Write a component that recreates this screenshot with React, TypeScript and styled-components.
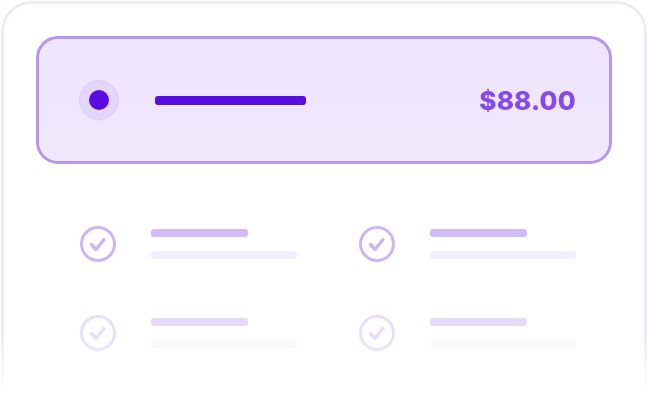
import styled, { createGlobalStyle } from "styled-components";

const GlobalStyle = createGlobalStyle`
  html, body {
    margin: 0;
    padding: 0;
    background: #ffffff;
    font-family: Inter, "Liberation Sans", sans-serif;
  }
`;

const Frame = styled.div`
  box-sizing: border-box;
  margin: 1px 1px 0 1px;
  height: 430px;
  border: 3px solid #efe9fe;
  border-radius: 30px;
  padding: 32px 32px 0 32px;
  background: #ffffff;
  -webkit-mask-image: linear-gradient(to bottom, #000 78%, transparent 92%);
  mask-image: linear-gradient(to bottom, #000 78%, transparent 92%);
`;

const PlanCard = styled.div`
  box-sizing: border-box;
  height: 128px;
  display: flex;
  align-items: center;
  padding: 0 33px 0 40px;
  border: 3px solid #b995f2;
  border-radius: 22px;
  background: linear-gradient(to bottom, #efe5fd, #f0e8fd);
`;

const Radio = styled.div`
  box-sizing: border-box;
  width: 40px;
  height: 40px;
  border-radius: 50%;
  background: #e3d6fa;
  border: 1px solid #dccdf8;
  display: flex;
  align-items: center;
  justify-content: center;
  flex-shrink: 0;
`;

const RadioDot = styled.div`
  width: 20px;
  height: 20px;
  border-radius: 50%;
  background: #5a0ce0;
`;

const TitleBar = styled.div`
  width: 151px;
  height: 9px;
  border-radius: 3px;
  background: #5a0de0;
  margin-left: 36px;
`;

const Price = styled.div`
  margin-left: auto;
  font-size: 26px;
  font-weight: 800;
  color: #8549ec;
  letter-spacing: 0.2px;
`;

const Features = styled.div`
  display: grid;
  grid-template-columns: 279px 1fr;
  row-gap: 53px;
  margin-top: 62px;
  padding-left: 44px;
`;

const Feature = styled.div`
  display: flex;
  align-items: center;
  gap: 35px;
`;

const Lines = styled.div`
  display: flex;
  flex-direction: column;
  gap: 14px;
`;

const Line = styled.div<{ $w: number; $c: string }>`
  width: ${(p) => p.$w}px;
  height: 8px;
  border-radius: 3px;
  background: ${(p) => p.$c};
`;

const tones = [
  { icon: "#cdb6f5", head: "#d0bbf6", sub: "#f4effe" },
  { icon: "#e9ddfb", head: "#e6dafb", sub: "#f9f6ff" },
];

const CheckIcon = ({ color }: { color: string }) => (
  <svg width="36" height="36" viewBox="0 0 36 36" fill="none">
    <circle cx="18" cy="18" r="16.5" stroke={color} strokeWidth="3" />
    <path
      d="M11.5 18.5l4.5 5 8-10"
      stroke={color}
      strokeWidth="3.4"
      strokeLinecap="round"
      strokeLinejoin="round"
    />
  </svg>
);

const items = [0, 0, 1, 1];

export default function App() {
  return (
    <>
      <GlobalStyle />
      <Frame>
        <PlanCard>
          <Radio>
            <RadioDot />
          </Radio>
          <TitleBar />
          <Price>$88.00</Price>
        </PlanCard>
        <Features>
          {items.map((t, i) => (
            <Feature key={i}>
              <CheckIcon color={tones[t].icon} />
              <Lines>
                <Line $w={97} $c={tones[t].head} />
                <Line $w={146} $c={tones[t].sub} />
              </Lines>
            </Feature>
          ))}
        </Features>
      </Frame>
    </>
  );
}
